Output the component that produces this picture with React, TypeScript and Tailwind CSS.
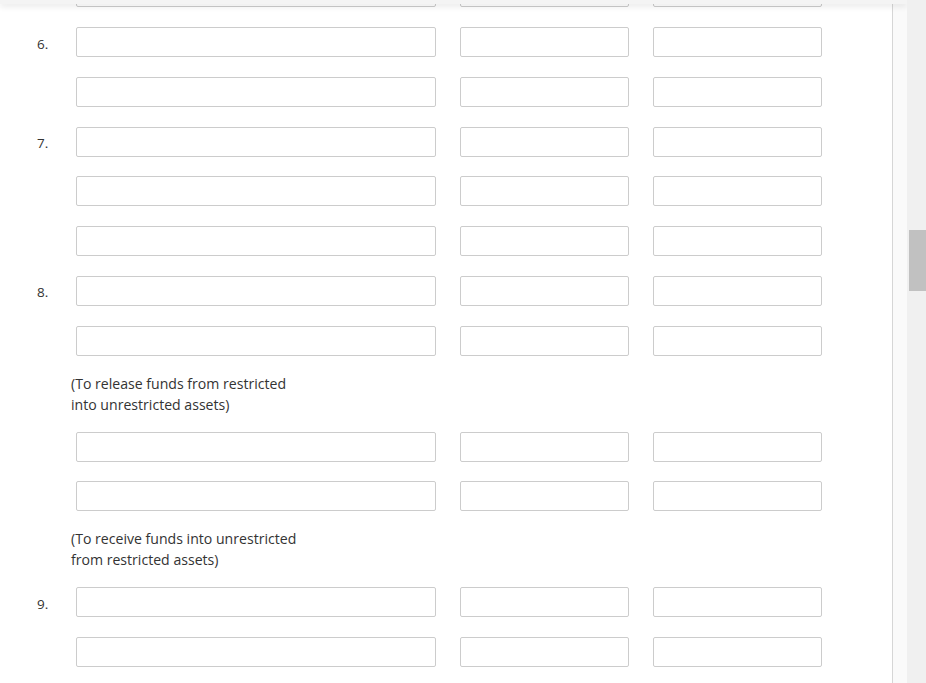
import React from "react";

type Item =
  | { kind: "row"; label?: string }
  | { kind: "note"; lines: [string, string] };

const items: Item[] = [
  { kind: "row", label: "" },
  { kind: "row", label: "6." },
  { kind: "row" },
  { kind: "row", label: "7." },
  { kind: "row" },
  { kind: "row" },
  { kind: "row", label: "8." },
  { kind: "row" },
  { kind: "note", lines: ["(To release funds from restricted", "into unrestricted assets)"] },
  { kind: "row" },
  { kind: "row" },
  { kind: "note", lines: ["(To receive funds into unrestricted", "from restricted assets)"] },
  { kind: "row", label: "9." },
  { kind: "row" },
];

function Box({ w }: { w: string }) {
  return <div className={`${w} h-[30px] shrink-0 rounded-[2px] border border-[#cccccc] bg-white`} />;
}

function Row({ label, mt }: { label?: string; mt: string }) {
  return (
    <div className={`flex items-center h-[30px] ${mt}`}>
      <div className="w-[76px] shrink-0 pl-[37px] pt-[3px] text-[13.5px] leading-[20px] text-[#333333]">
        {label}
      </div>
      <Box w="w-[360px]" />
      <div className="w-[24px] shrink-0" />
      <Box w="w-[169px]" />
      <div className="w-[24px] shrink-0" />
      <Box w="w-[169px]" />
    </div>
  );
}

export default function App() {
  return (
    <div
      className="relative flex h-[683px] w-[926px] overflow-hidden bg-white"
      style={{ fontFamily: '"Open Sans", "Noto Sans", sans-serif' }}
    >
      <div className="relative flex w-[907px] shrink-0">
        <div className="w-[893px] shrink-0 border-r border-[#d6d6d6] bg-white">
          <div className="flex flex-col">
            {items.map((it, i) => {
              if (it.kind === "note") {
                return (
                  <div
                    key={i}
                    className="mt-[17px] pl-[71px] text-[14.1px] leading-[21px] text-[#333333]"
                  >
                    <div>{it.lines[0]}</div>
                    <div>{it.lines[1]}</div>
                  </div>
                );
              }
              const prev = items[i - 1];
              const mt =
                i === 0 ? "mt-[-22.75px]" : prev && prev.kind === "note" ? "mt-[17px]" : "mt-[19.75px]";
              return <Row key={i} label={it.label} mt={mt} />;
            })}
          </div>
        </div>
        <div className="flex-1 bg-[#fafafa]" />
        <div className="absolute left-0 top-0 h-[4px] w-[907px] bg-[#f4f4f4] shadow-[0_2px_6px_rgba(0,0,0,0.12)]" />
      </div>
      <div className="relative w-[19px] shrink-0 bg-[#f0f0f0]">
        <div className="absolute left-[2px] right-0 top-[230px] h-[61px] bg-[#c1c1c1]" />
      </div>
    </div>
  );
}
